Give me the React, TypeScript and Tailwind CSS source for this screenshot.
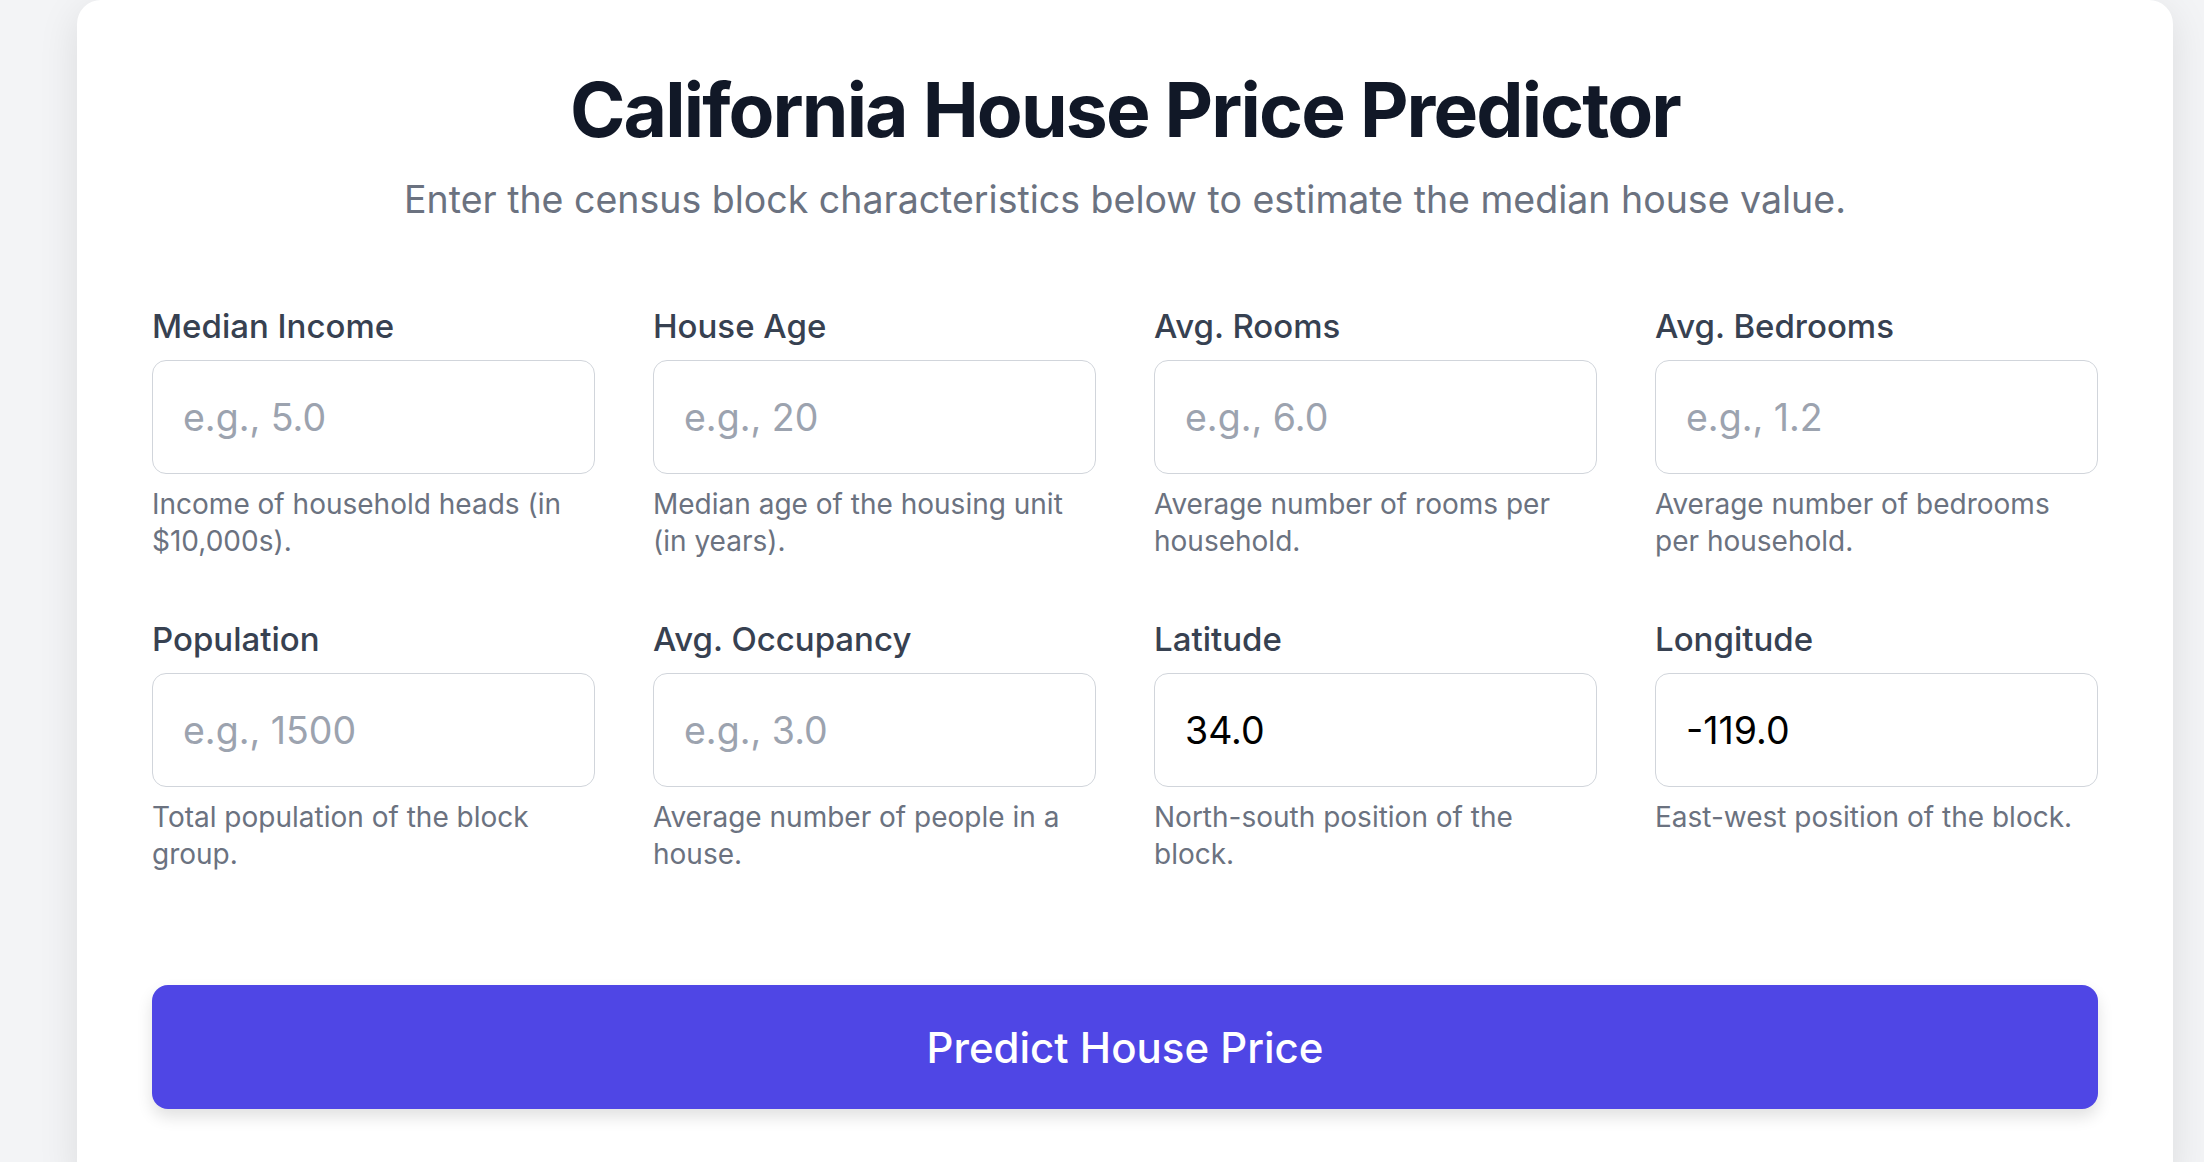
import React from "react";

type Field = { label: string; placeholder: string; value?: string; help: string };

const fields: Field[] = [
  { label: "Median Income", placeholder: "e.g., 5.0", help: "Income of household heads (in $10,000s)." },
  { label: "House Age", placeholder: "e.g., 20", help: "Median age of the housing unit (in years)." },
  { label: "Avg. Rooms", placeholder: "e.g., 6.0", help: "Average number of rooms per household." },
  { label: "Avg. Bedrooms", placeholder: "e.g., 1.2", help: "Average number of bedrooms per household." },
  { label: "Population", placeholder: "e.g., 1500", help: "Total population of the block group." },
  { label: "Avg. Occupancy", placeholder: "e.g., 3.0", help: "Average number of people in a house." },
  { label: "Latitude", placeholder: "e.g., 34.0", value: "34.0", help: "North-south position of the block." },
  { label: "Longitude", placeholder: "e.g., -119.0", value: "-119.0", help: "East-west position of the block." },
];

export default function App() {
  return (
    <div
      className="h-[1162px] w-full overflow-hidden bg-[#f3f4f6]"
      style={{ fontFamily: "Inter, 'Noto Sans', sans-serif" }}
    >
      <div className="ml-[77px] w-[2096px] rounded-[24px] bg-white px-[75px] pt-[70px] pb-[75px] shadow-[0_10px_40px_rgba(0,0,0,0.10)]">
        <h1 className="text-center text-[75px] leading-[80px] font-bold tracking-[-0.025em] text-[#111827]">
          California House Price Predictor
        </h1>
        <p className="mt-[26px] text-center text-[37.5px] leading-[48px] text-[#6b7280]">
          Enter the census block characteristics below to estimate the median house value.
        </p>

        <div className="mt-[82px] grid grid-cols-4 gap-x-[58px] gap-y-[59px]">
          {fields.map((f) => (
            <div key={f.label} className="flex flex-col">
              <label className="text-[33px] leading-[40px] font-medium text-[#374151]">{f.label}</label>
              <input
                type="text"
                placeholder={f.placeholder}
                defaultValue={f.value}
                className="mt-[14px] h-[114px] w-full rounded-[14px] border border-[#d1d5db] bg-white px-[30px] text-[37.5px] text-black placeholder:text-[#9ca3af] outline-none"
                style={{ fontFamily: "Inter, 'Noto Sans', sans-serif" }}
              />
              <p className="mt-[12px] text-[28px] leading-[37px] text-[#6b7280]">{f.help}</p>
            </div>
          ))}
        </div>

        <button className="mt-[112px] flex h-[124px] w-full items-center justify-center rounded-[16px] bg-[#4f46e5] text-[42px] font-medium text-white shadow-[0_8px_16px_rgba(0,0,0,0.12)]">
          Predict House Price
        </button>
      </div>
    </div>
  );
}
